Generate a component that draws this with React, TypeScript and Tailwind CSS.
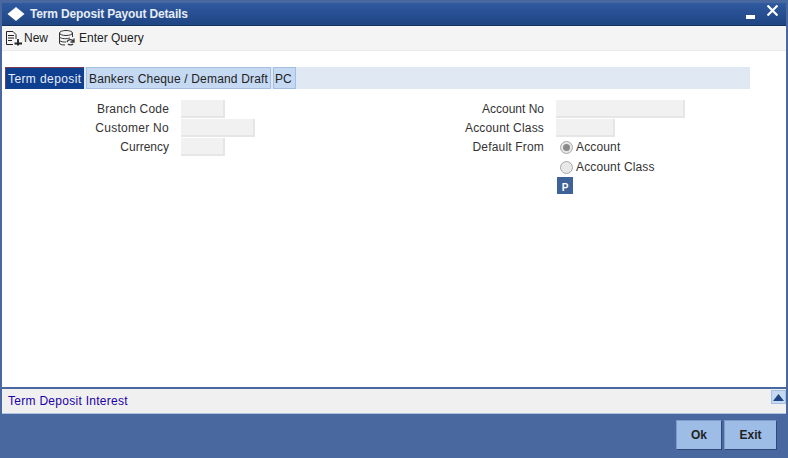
import { ReactNode } from "react";

function Field({ label, width, tracking = "tracking-[0.18px]" }: { label: string; width: string; tracking?: string }) {
  return (
    <div className="flex items-center h-[19px]">
      <span className={`w-[167px] text-right text-[#333] whitespace-nowrap ${tracking}`}>{label}</span>
      <div className={`ml-[12px] h-[18px] bg-[#f1f1f1] border-b-2 border-r-2 border-[#e6e6e6] ${width}`} />
    </div>
  );
}

function Radio({ checked, children }: { checked?: boolean; children: ReactNode }) {
  return (
    <div className="flex items-center h-[20px]">
      <span className="w-[13px] h-[13px] rounded-full border border-[#a8a8a8] bg-[#e8e8e8] flex items-center justify-center">
        {checked && <span className="w-[7px] h-[7px] rounded-full bg-[#8a8a8a]" />}
      </span>
      <span className="ml-[3px] text-[#333] tracking-[0.15px]">{children}</span>
    </div>
  );
}

export default function App() {
  return (
    <div className="w-[788px] h-[458px] flex flex-col bg-[#48689f] px-[2px] pb-[2px] pt-[3px] font-['Liberation_Sans',Arial,sans-serif] text-[12px] overflow-hidden">
      {/* title */}
      <div className="h-[23px] shrink-0 flex items-center bg-gradient-to-b from-[#2f5a9f] to-[#1f4483] border-b border-[#16305f] text-white">
        <svg width="20" height="18" viewBox="0 0 20 18" className="ml-[4px] shrink-0">
          <path d="M10 2 L18.5 9 L10 16 L1.5 9 Z" fill="#fff" />
        </svg>
        <span className="ml-[4px] font-bold text-[12px] tracking-[-0.15px] text-[#e6ecf6]">Term Deposit Payout Details</span>
        <div className="ml-auto flex items-center mr-[8px]">
          <svg width="9" height="4" viewBox="0 0 9 4" className="mt-[6px]">
            <rect width="9" height="4" fill="#fff" />
          </svg>
          <svg width="11" height="11" viewBox="0 0 11 11" className="ml-[12px] mb-[7px]">
            <path d="M0.5 0.5 L10.5 10.5 M10.5 0.5 L0.5 10.5" stroke="#fff" strokeWidth="2.2" />
          </svg>
        </div>
      </div>

      <div className="flex-1 flex flex-col bg-white min-h-0">
        {/* toolbar */}
        <div className="h-[25px] shrink-0 bg-[#f4f4f4] border-b border-[#ebebeb] flex items-center text-[12px] text-[#222]">
          <svg width="19" height="18" viewBox="0 0 19 18" className="ml-[2px]" fill="none" stroke="#222">
            <path d="M2.5 2.5 H9 L12 5.5 V10 M2.5 2.5 V15.5 H9" />
            <path d="M4 6.5 H10 M4 9 H10 M4 11.5 H8" />
            <path d="M14 10 V16.5 M10.5 14.5 H18" strokeWidth="1.8" />
          </svg>
          <span className="ml-[1px]">New</span>
          <svg width="19" height="18" viewBox="0 0 19 18" className="ml-[10px]" fill="none" stroke="#333">
            <ellipse cx="8" cy="4" rx="6.5" ry="2.5" />
            <path d="M1.5 4 V14 C1.5 15.5 4 16 7 16 M14.5 4 V8 M1.5 8 C3 10 9 10 12 9 M1.5 11.5 C3 13 6 13 8 13" />
            <path d="M9 13 C10 10 14 10 16 12.5 M16 9.5 V13 H12.5 M10 15 C11.5 16.5 14 16 15 15" strokeWidth="1.3" />
          </svg>
          <span className="ml-[2px]">Enter Query</span>
        </div>

        {/* tabs */}
        <div className="mt-[16px] ml-[3px] w-[745px] h-[22px] shrink-0 bg-[#e0e8f4] flex gap-[2px] text-[12px]">
          <div className="w-[79px] h-full flex items-center pl-[2px] pt-[1px] bg-[#0f3f8f] border border-[#0f3f8f] border-l-[#7a3a55] border-t-[#7a3a55] text-[#e8eef8] tracking-[0.4px] whitespace-nowrap">Term deposit</div>
          <div className="w-[185px] h-full flex items-center pl-[2px] pt-[1px] bg-[#c5d9f2] border border-[#a5bfe0] text-[#222] tracking-[0.17px] whitespace-nowrap">Bankers Cheque / Demand Draft</div>
          <div className="w-[23px] h-full flex items-center pl-[1px] pt-[1px] bg-[#c5d9f2] border border-[#a5bfe0] text-[#222]">PC</div>
        </div>

        {/* form */}
        <div className="flex flex-1 pt-[10px] min-h-0">
          <div className="w-[375px] shrink-0">
            <Field label="Branch Code" width="w-[44px]" />
            <Field label="Customer No" width="w-[74px]" tracking="tracking-[0.27px]" />
            <Field label="Currency" width="w-[44px]" tracking="tracking-[0px]" />
          </div>
          <div>
            <Field label="Account No" width="w-[129px]" tracking="tracking-[0px]" />
            <Field label="Account Class" width="w-[59px]" />
            <div className="flex">
              <span className="w-[167px] h-[19px] flex items-center justify-end text-[#333] tracking-[0.18px]">Default From</span>
              <div className="ml-[16px]">
                <Radio checked>Account</Radio>
                <Radio>Account Class</Radio>
                <div className="-ml-[3px] w-[16px] h-[17px] bg-[#3f6298] flex items-end justify-center text-white text-[10px] font-bold leading-[13px]">P</div>
              </div>
            </div>
          </div>
        </div>

        {/* sub screen bar */}
        <div className="h-[27px] shrink-0 bg-[#f0f0f0] border-t-2 border-[#48689f] border-b border-b-[#b0c4e4] flex items-center">
          <span className="ml-[6px] text-[#2000a8] tracking-[0.28px]">Term Deposit Interest</span>
          <div className="ml-auto self-start mt-[1px] w-[15px] h-[14px] bg-[#c5d9f2] border border-[#a5bfe0] flex items-center justify-center">
            <svg width="11" height="7" viewBox="0 0 11 7"><path d="M5.5 0 L11 7 H0 Z" fill="#1f4483" /></svg>
          </div>
        </div>

        {/* footer */}
        <div className="h-[42px] shrink-0 bg-[#48689f] flex items-center justify-end pr-[9px] gap-[2px]">
          <button className="w-[46px] h-[30px] bg-[#9dbde6] border border-[#2f4a78] border-l-[#7d9cc8] border-t-[#7d9cc8] font-bold text-[12px] text-[#222]">Ok</button>
          <button className="w-[53px] h-[30px] bg-[#9dbde6] border border-[#2f4a78] border-l-[#7d9cc8] border-t-[#7d9cc8] font-bold text-[12px] text-[#222]">Exit</button>
        </div>
      </div>
    </div>
  );
}
